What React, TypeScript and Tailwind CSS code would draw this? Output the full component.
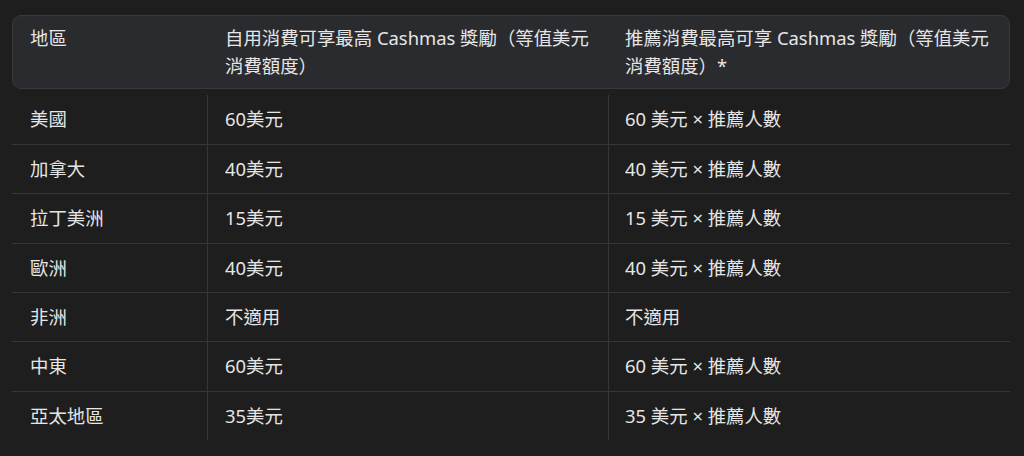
import React from "react";

const rows: [string, string, string][] = [
  ["美國", "60美元", "60 美元 × 推薦人數"],
  ["加拿大", "40美元", "40 美元 × 推薦人數"],
  ["拉丁美洲", "15美元", "15 美元 × 推薦人數"],
  ["歐洲", "40美元", "40 美元 × 推薦人數"],
  ["非洲", "不適用", "不適用"],
  ["中東", "60美元", "60 美元 × 推薦人數"],
  ["亞太地區", "35美元", "35 美元 × 推薦人數"],
];

export default function App() {
  return (
    <div
      className="w-[1024px] h-[456px] bg-[#1e1e1e] text-[#e6e6e6] pl-[12px] pr-[14px] pt-[15px] overflow-hidden"
      style={{ fontFamily: '"Noto Sans", "Noto Sans CJK TC", sans-serif' }}
    >
      <div className="rounded-[9px] border border-[#38393c] bg-[#2a2b2e] grid grid-cols-[194px_401px_1fr] text-[18.4px] leading-[28.2px] py-[8px]">
        <div className="pl-[17px] pr-[12px]">地區</div>
        <div className="pl-[18px] pr-[12px]">自用消費可享最高 Cashmas 獎勵（等值美元消費額度）</div>
        <div className="pl-[17px] pr-[12px]">推薦消費最高可享 Cashmas 獎勵（等值美元消費額度）*</div>
      </div>
      <div className="mt-[6px]">
        {rows.map((r, i) => (
          <div
            key={i}
            className={`grid grid-cols-[195px_401px_1fr] text-[18.4px] leading-[28.4px] ${
              i > 0 ? "border-t border-[#363636]" : ""
            }`}
          >
            <div className="pl-[18px] py-[10px]">{r[0]}</div>
            <div className="pl-[17px] py-[10px] border-l border-[#363636]">{r[1]}</div>
            <div className="pl-[16px] py-[10px] border-l border-[#363636]">{r[2]}</div>
          </div>
        ))}
      </div>
    </div>
  );
}
